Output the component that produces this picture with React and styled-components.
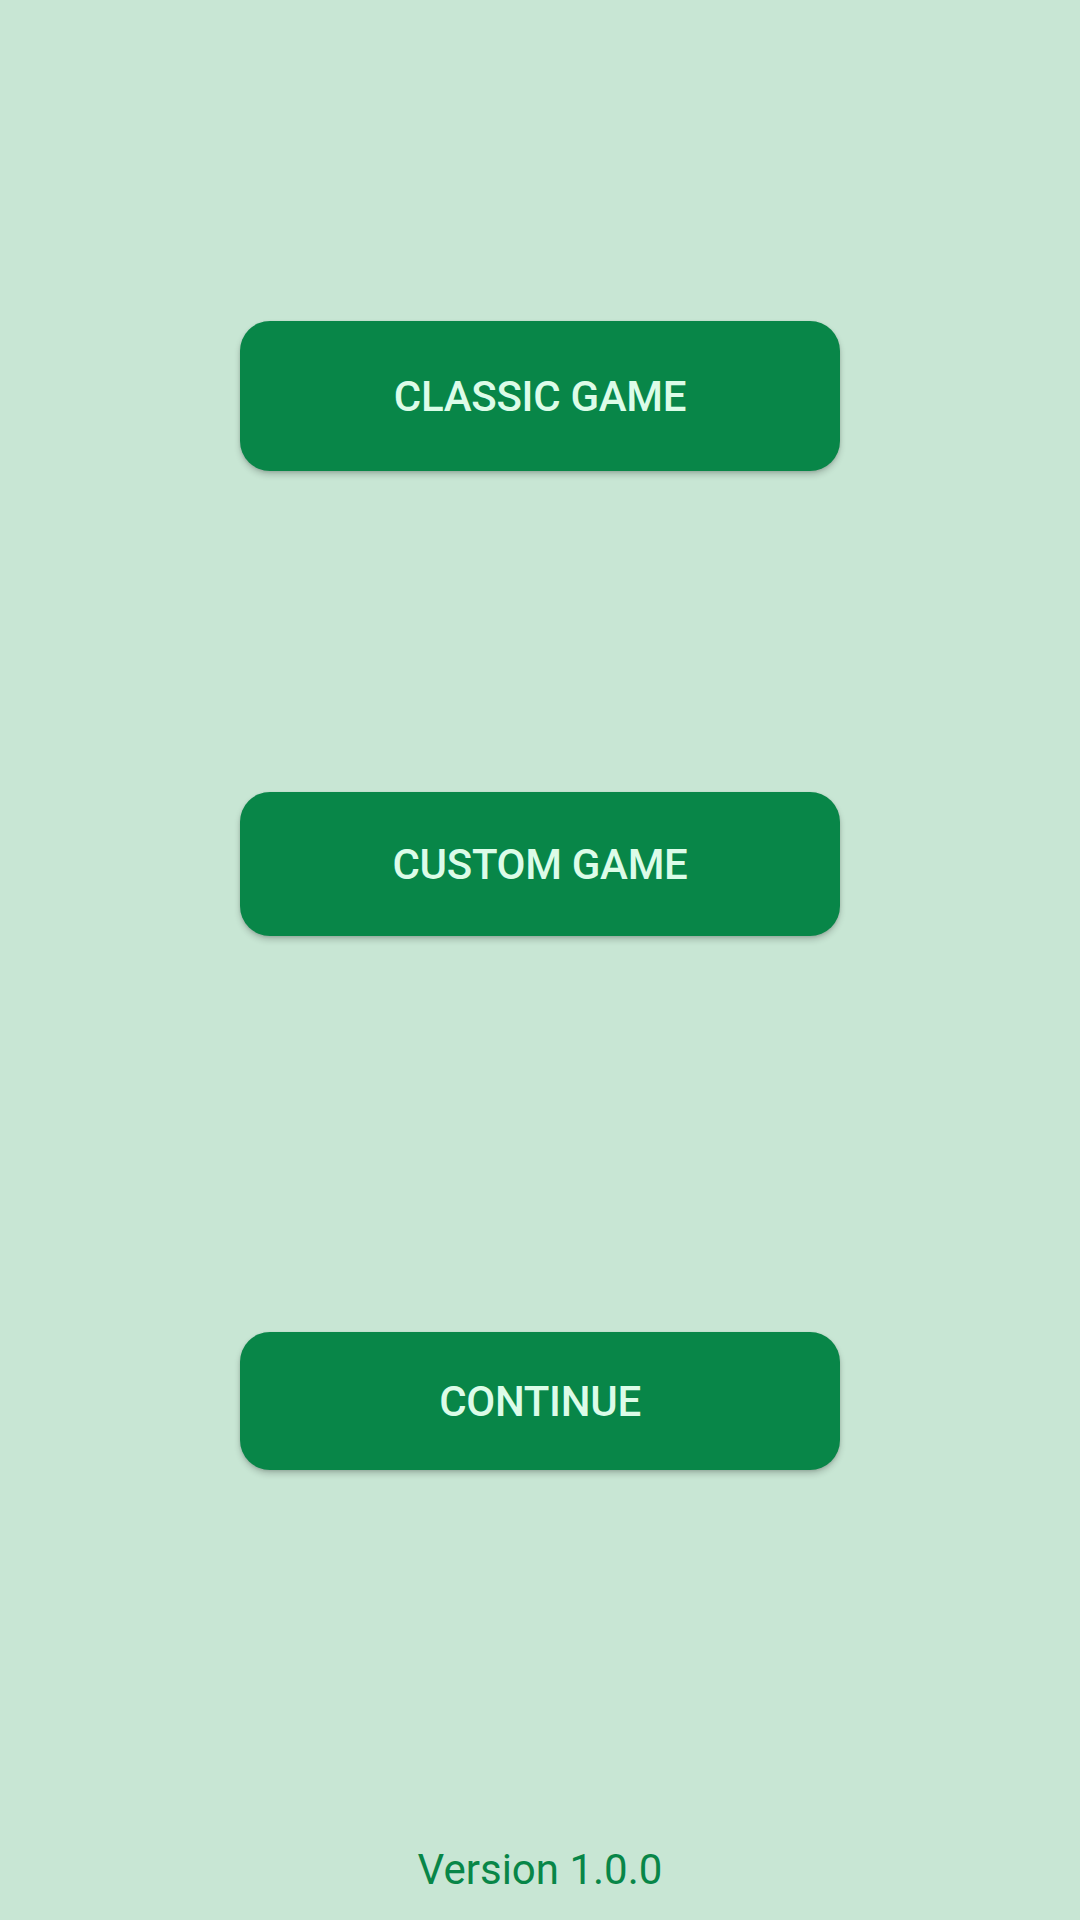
import React from 'react';
import styled, { createGlobalStyle } from 'styled-components';

const COLORS = {
  background: '#c8e6d4',
  primary: '#088648',
  buttonText: '#dcfce8',
};

const GlobalStyle = createGlobalStyle`
  html, body {
    margin: 0;
    padding: 0;
    background: ${COLORS.background};
  }
  body {
    font-family: Roboto, "Liberation Sans", sans-serif;
  }
`;

const Screen = styled.main`
  width: 1080px;
  height: 1920px;
  box-sizing: border-box;
  padding-top: 321px;
  display: flex;
  flex-direction: column;
  align-items: center;
  background: ${COLORS.background};
`;

const Menu = styled.div`
  display: flex;
  flex-direction: column;
  align-items: center;
`;

const MenuButton = styled.button`
  width: 600px;
  height: ${(p) => p.$height}px;
  margin-bottom: ${(p) => p.$gap || 0}px;
  border: none;
  border-radius: 30px;
  background: ${COLORS.primary};
  color: ${COLORS.buttonText};
  font-family: Roboto, "Liberation Sans", sans-serif;
  font-weight: 500;
  font-size: 42px;
  letter-spacing: -0.3px;
  text-transform: uppercase;
  box-shadow: 0 4px 6px rgba(0, 0, 0, 0.18), 0 1px 3px rgba(0, 0, 0, 0.12);
  cursor: pointer;
`;

const Footer = styled.footer`
  margin-top: auto;
  padding-bottom: 26px;
  color: ${COLORS.primary};
  font-size: 42px;
  font-weight: 400;
`;

const App = () => {
  return (
    <>
      <GlobalStyle />
      <Screen>
        <Menu>
          <MenuButton $height={150} $gap={321}>Classic Game</MenuButton>
          <MenuButton $height={144} $gap={396}>Custom Game</MenuButton>
          <MenuButton $height={138}>Continue</MenuButton>
        </Menu>
        <Footer>Version 1.0.0</Footer>
      </Screen>
    </>
  );
};

export default App;
